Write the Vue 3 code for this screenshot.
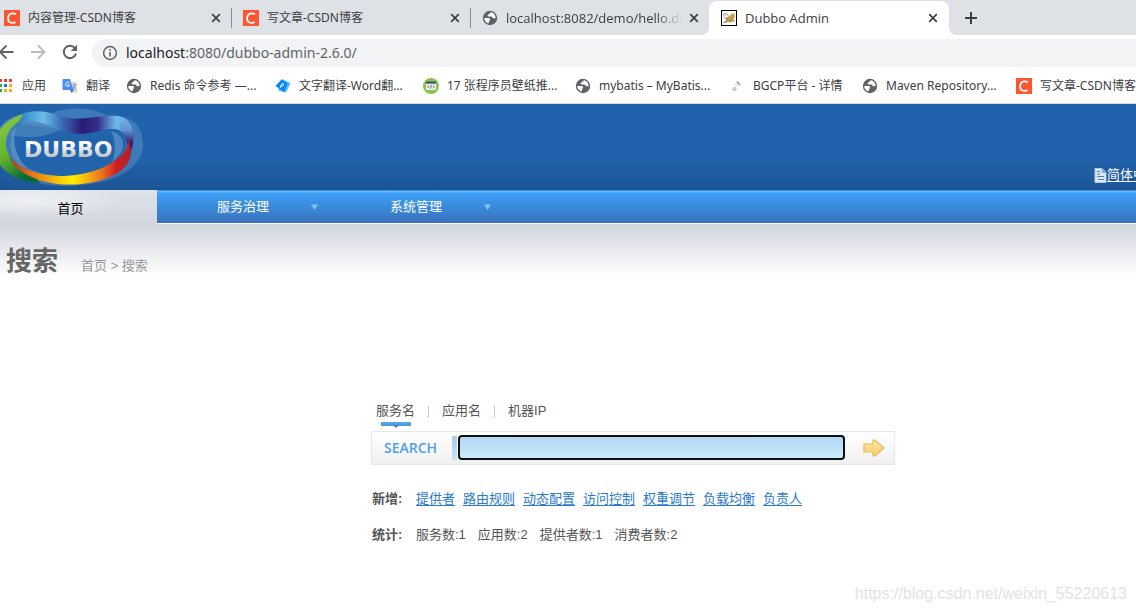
<script setup>
import { ref } from 'vue'

const tabs = [
  { icon: 'csdn', title: '内容管理-CSDN博客' },
  { icon: 'csdn', title: '写文章-CSDN博客' },
  { icon: 'globe', title: 'localhost:8082/demo/hello.do?', latin: true },
  { icon: 'cat', title: 'Dubbo Admin', latin: true, active: true }
]

const bookmarks = [
  { icon: 'apps', title: '应用' },
  { icon: 'translate', title: '翻译' },
  { icon: 'globe', title: 'Redis 命令参考 —...' },
  { icon: 'diamond', title: '文字翻译-Word翻...' },
  { icon: 'code', title: '17 张程序员壁纸推...' },
  { icon: 'globe', title: 'mybatis – MyBatis...' },
  { icon: 'bgcp', title: 'BGCP平台 - 详情' },
  { icon: 'globe', title: 'Maven Repository...' },
  { icon: 'csdn', title: '写文章-CSDN博客' }
]

const menus = ['服务治理', '系统管理']
const searchTypes = ['服务名', '应用名', '机器IP']
const current = ref(0)
const keyword = ref('')
const links = ['提供者', '路由规则', '动态配置', '访问控制', '权重调节', '负载均衡', '负责人']
const stats = ['服务数:1', '应用数:2', '提供者数:1', '消费者数:2']
</script>

<template>
  <div class="window">
    <svg class="defs" width="0" height="0" aria-hidden="true">
      <symbol id="i-csdn" viewBox="0 0 16 16">
        <rect width="16" height="16" fill="#fc5531" />
        <path d="M12 4.3C10.600 3.400 9.200 3.100 7.900 3.400C5.500 3.900 4.200 5.800 4.100 8.300C4 11.200 5.600 12.800 8.300 12.800C9.700 12.800 10.900 12.500 11.700 12.100" fill="none" stroke="#fff" stroke-width="1.800" />
      </symbol>
      <symbol id="i-globe" viewBox="0 0 16 16">
        <circle cx="8" cy="8" r="7.200" fill="#5f6368" />
        <path d="M9.200 2.300C7.500 3 7.800 4.100 6.400 4.500C5 5 5.600 6.600 6.800 6.500H9.200C10.600 6.600 10.300 8.300 11.700 8.300H13.700C13.600 5.300 11.800 2.900 9.200 2.300Z" fill="#fff" />
        <path d="M2.300 8H6.200C8 8 8.700 9.200 7.700 10.300C6.800 11.200 7.400 12.500 6.200 13.400C3.800 12.700 2.200 10.400 2.300 8Z" fill="#fff" />
      </symbol>
      <symbol id="i-cat" viewBox="0 0 16 16">
        <rect x=".5" y=".5" width="15" height="15" fill="#fff" stroke="#000" />
        <path d="M3 13L5.500 10.500L4.500 8.500L6.500 7L9.500 5.500L10 3L11.500 4.200L13.500 3L13.800 7L12.500 9L14 12L11.500 11.500L9.500 12.500L8 11L5 13Z" fill="#c99d49" />
        <path d="M2 5L3 3.500L6 4L7.500 6M2 13L6 10.500L8 12L11 10M3 8L7 8.500" fill="none" stroke="#77756b" stroke-width=".7" />
        <path d="M2 5L5 5.500L3.500 7Z" fill="#a9b4b9" />
      </symbol>
      <symbol id="i-apps" viewBox="0 0 16 16">
        <path d="M1 1h3v3H1zM6 1h3v3H6zM11 1h3v3h-3z" fill="#ea4335" />
        <path d="M1 6h3v3H1zM1 11h3v3H1z" fill="#34a853" />
        <path d="M6 6h3v3H6z" fill="#1a73e8" />
        <path d="M11 6h3v3h-3zM6 11h3v3H6zM11 11h3v3h-3z" fill="#fbad03" />
      </symbol>
      <symbol id="i-translate" viewBox="0 0 16 16">
        <path d="M7 4H15V14.500H8Z" fill="#d5dae0" />
        <path d="M1.500 1H8L11.500 12H1.500Q.5 12 .5 11V2Q.5 1 1.500 1Z" fill="#4c8bf5" />
        <path d="M8.500 12H11.500L9.700 15Z" fill="#2f62c8" />
        <path d="M7.300 5.200A2 2 0 1 0 7.500 7H5.800" fill="none" stroke="#fff" />
        <path d="M10.500 7H14.200M12.500 6V7M13.500 7.500L10.800 11.500M11.300 8.500L13.800 11.500" stroke="#7b8795" fill="none" stroke-width=".8" />
      </symbol>
      <symbol id="i-diamond" viewBox="0 0 16 16">
        <path d="M7 1L15.500 5L11 14.500L3 12.500Z" fill="#54b6ff" />
        <path d="M6.500 1.500L12.500 5.500L9 14L.5 8Z" fill="#0784f7" />
        <path d="M5 10L7 5.500Q9.300 5.800 8.500 7.500Q7.500 8.500 6 7.800" fill="none" stroke="#fff" />
      </symbol>
      <symbol id="i-code" viewBox="0 0 16 16">
        <circle cx="8" cy="8" r="8" fill="#8cc152" />
        <rect x="3" y="4" width="10" height="8" rx="1" fill="#eef2ea" />
        <rect x="3" y="3.500" width="10" height="2.200" fill="#435263" />
        <path d="M6 7.200L4.700 8.700L6 10.200M10 7.200L11.300 8.700L10 10.200M8.500 7L7.500 10.500" fill="none" stroke="#435263" stroke-width=".8" />
      </symbol>
      <symbol id="i-bgcp" viewBox="0 0 16 16">
        <path d="M7 4L9 3L12 7L10 7.500Z" fill="#aaa" />
        <path d="M6.500 5L7.500 9" stroke="#ddd" />
        <circle cx="5.500" cy="11" r="1.500" fill="#eee" stroke="#aaa" />
      </symbol>
    </svg>

    <header class="browser">
      <div class="tabstrip">
        <div v-for="(t, i) in tabs" :key="i" class="tab" :class="{ active: t.active }">
          <svg class="icon" aria-hidden="true"><use :href="'#i-' + t.icon" /></svg>
          <span class="tab-title" :class="{ latin: t.latin, faded: i === 2 }">{{ t.title }}</span>
          <button class="close" aria-label="关闭">
            <svg width="10" height="10" viewBox="0 0 10 10"><path d="M1.200 1.200L8.800 8.800M8.800 1.200L1.200 8.800" stroke="#3c4043" stroke-width="1.700" /></svg>
          </button>
        </div>
        <button class="newtab" aria-label="新标签页">
          <svg width="14" height="14" viewBox="0 0 14 14"><path d="M7 1V13M1 7H13" stroke="#3c4043" stroke-width="2" /></svg>
        </button>
      </div>

      <div class="toolbar">
        <button class="tool back" aria-label="后退">
          <svg width="16" height="16" viewBox="0 0 16 16"><path d="M15.500 8H2.500M8.500 1.500L2 8L8.500 14.500" fill="none" stroke="#5f6368" stroke-width="1.900" /></svg>
        </button>
        <button class="tool" aria-label="前进">
          <svg width="16" height="16" viewBox="0 0 16 16"><path d="M1 8H14M8 1.500L14.500 8L8 14.500" fill="none" stroke="#babcbe" stroke-width="1.900" /></svg>
        </button>
        <button class="tool" aria-label="刷新">
          <svg width="16" height="16" viewBox="0 0 16 16"><path d="M13.200 4.500A6.200 6.200 0 1 0 14 9.500" fill="none" stroke="#5f6368" stroke-width="2" /><path d="M15 .8V7H8.800Z" fill="#5f6368" /></svg>
        </button>
        <div class="omnibox">
          <svg width="16" height="16" viewBox="0 0 16 16" aria-hidden="true"><circle cx="8" cy="8" r="6.400" fill="none" stroke="#5f6368" stroke-width="1.500" /><path d="M8 7V11.500M8 4.300V5.900" stroke="#5f6368" stroke-width="1.600" /></svg>
          <span class="url"><b>localhost</b>:8080/dubbo-admin-2.6.0/</span>
        </div>
      </div>

      <nav class="bookmarks">
        <a v-for="(b, i) in bookmarks" :key="i" href="#" class="bookmark" :class="b.icon">
          <svg class="icon" aria-hidden="true"><use :href="'#i-' + b.icon" /></svg>
          <span>{{ b.title }}</span>
        </a>
      </nav>
    </header>

    <div class="banner">
      <svg class="logo" width="146" height="86" viewBox="0 0 146 86" role="img" aria-label="DUBBO">
        <defs>
          <linearGradient id="gr" x1="0" y1="0" x2=".5" y2="1">
            <stop offset="0" stop-color="#5fb6a0" /><stop offset=".25" stop-color="#7fc241" /><stop offset=".6" stop-color="#64b32e" /><stop offset="1" stop-color="#076b35" />
          </linearGradient>
          <linearGradient id="bl" x1="0" x2="1">
            <stop offset="0" stop-color="#2b7dba" /><stop offset=".22" stop-color="#6cbdeb" /><stop offset=".38" stop-color="#3b6fb8" /><stop offset=".56" stop-color="#2b1a73" /><stop offset=".7" stop-color="#33308a" /><stop offset=".86" stop-color="#6eb7ea" /><stop offset="1" stop-color="#6aaee4" />
          </linearGradient>
          <linearGradient id="side" x1="0" y1="0" x2="0" y2="1">
            <stop offset="0" stop-color="#71b7e8" /><stop offset=".3" stop-color="#5f95d2" /><stop offset=".6" stop-color="#311b70" /><stop offset="1" stop-color="#57245f" />
          </linearGradient>
          <linearGradient id="warm" x1="0" x2="1">
            <stop offset="0" stop-color="#bd2a20" /><stop offset=".2" stop-color="#e77916" /><stop offset=".52" stop-color="#fff000" /><stop offset=".75" stop-color="#ed7a1e" /><stop offset=".88" stop-color="#cf2023" /><stop offset="1" stop-color="#b31f28" />
          </linearGradient>
          <linearGradient id="silver" x1="0" y1="0" x2="0" y2="1">
            <stop offset=".25" stop-color="#fff" /><stop offset=".85" stop-color="#b9bcc0" />
          </linearGradient>
        </defs>
        <path d="M-6 40C-4 14 20 5 48 11C64 2 92 2 110 13C132 9 144 24 143 43C141 64 115 79 80 81C38 86 -4 70 -6 40Z" fill="#6fa2cf" opacity=".38" />
        <path d="M18 19C12 32 14 48 23 60C42 76 94 78 117 57C128 48 130 33 120 24C108 14 75 32 18 19Z" fill="#2164ac" />
        <path d="M9 31C36 36 48 31 60 26L40 18L22 16Z" fill="#6da5d1" opacity=".4" />
        <path d="M16 24C11 38 16 54 28 65L20 62C8 50 8 34 16 24Z" fill="#6b9cca" opacity=".5" />
        <path d="M111 27C126 31 128 47 112 58C116 47 116 36 111 27Z" fill="#6b9cca" opacity=".6" />
        <path d="M34 8C10 10 -6 26 -6 43C-4 66 14 77 40 79L34 72C22 67 8 56 6 42C5 26 17 14 40 10Z" fill="url(#gr)" />
        <path d="M24 9C35 6 47 7 57 11C73 18 91 13 106 12C119 10 128 13 132 24L126 32C121 24 113 24 103 26C87 31 71 32 54 24C44 19 31 15 18 19Z" fill="url(#bl)" />
        <path d="M122 13C130 16 135 26 133 40L129 56C129 43 127 31 119 24Z" fill="url(#side)" />
        <path d="M9 53C22 67 43 72 64 72C91 71 111 62 123 50C127 45 129 40 128 34C134 50 130 60 120 67C103 79 80 82 57 80C35 77 16 68 9 53Z" fill="url(#warm)" />
        <text x="24" y="53" class="logo-text" fill="url(#silver)">DUBBO</text>
      </svg>
      <a href="#" class="lang">
        <svg width="13" height="15" viewBox="0 0 13 15" aria-hidden="true"><path d="M1 .5H8L12 4.500V14.500H1Z" fill="#dce8f5" stroke="#b6cce5" /><path d="M8 .5V4.500H12" fill="#7e9fce" stroke="#9bb7dc" /><path d="M3 3.500H6M3 6H6M3 8.500H10M4 11.500H10" stroke="#527fb7" /></svg><span>简体中文</span>
      </a>
    </div>

    <nav class="menu">
      <a href="#" class="home">首页</a>
      <a v-for="m in menus" :key="m" href="#" class="menu-item">
        <span>{{ m }}</span>
        <svg width="7" height="6" viewBox="0 0 7 6" aria-hidden="true"><path d="M0 .5H7L3.500 6Z" fill="#84c1f7" /></svg>
      </a>
    </nav>

    <main class="page">
      <div class="heading">
        <h1>搜索</h1>
        <div class="crumbs"><a href="#">首页</a> &gt; <span>搜索</span></div>
      </div>

      <section class="search">
        <div class="types">
          <template v-for="(s, i) in searchTypes" :key="s">
            <i v-if="i" class="bar"></i>
            <button class="type" :class="{ on: current === i }" @click="current = i">{{ s }}</button>
          </template>
        </div>
        <form class="box" @submit.prevent>
          <label for="keyword">SEARCH</label>
          <span class="edge"></span>
          <input id="keyword" v-model="keyword" type="text" autocomplete="off" />
          <button class="go" aria-label="搜索">
            <svg width="22" height="18" viewBox="0 0 22 18">
              <defs><linearGradient id="gold" x1="0" y1="0" x2="0" y2="1"><stop offset="0" stop-color="#fff7a8" /><stop offset=".55" stop-color="#ffd08a" /><stop offset="1" stop-color="#fbe476" /></linearGradient></defs>
              <path d="M1 5H10V1H11.500L21 9L11.500 17H10V13H1Z" fill="url(#gold)" stroke="#e5b94f" stroke-width="1.200" stroke-linejoin="round" />
            </svg>
          </button>
        </form>
        <div class="line">
          <strong>新增:</strong>
          <div class="links"><a v-for="l in links" :key="l" href="#">{{ l }}</a></div>
        </div>
        <div class="line">
          <strong>统计:</strong>
          <div class="stats"><span v-for="s in stats" :key="s">{{ s }}</span></div>
        </div>
      </section>
    </main>
    <div class="watermark">https://blog.csdn.net/weixin_55220613</div>
  </div>
</template>

<style>
html, body { background: #fff; }
</style>

<style scoped>
.window {
  position: relative;
  min-height: 100vh;
  overflow: hidden;
  font: 13px/20px "Liberation Sans", "Noto Sans CJK SC", sans-serif;
  color: #555;
}
.defs { position: absolute; }
button { padding: 0; border: 0; background: none; font: inherit; color: inherit; }
svg { display: block; flex: none; }
a { color: inherit; text-decoration: none; }
.icon { width: 16px; height: 16px; }

.browser {
  font: 12px/16px "Noto Sans", "Noto Sans CJK SC", sans-serif;
  color: #3c4043;
  border-bottom: 1px solid #d9dadc;
}
.latin { font-family: "Open Sans", sans-serif; font-size: 13px; }
.tabstrip { display: flex; height: 35px; background: #dee1e6; }
.tab {
  box-sizing: border-box;
  flex: 0 0 239px;
  min-width: 0;
  display: flex;
  align-items: center;
  gap: 8px;
  padding: 1px 11px 0 11px;
  position: relative;
}
.tab:first-child { flex-basis: 232px; padding-left: 4px; }
.tab:nth-child(-n+2)::after {
  content: "";
  position: absolute;
  right: 0;
  top: 8px;
  height: 20px;
  width: 1px;
  background: #8b8e93;
}
.tab.active {
  flex-basis: 240px;
  margin: 1px 0 0 -1px;
  padding: 0 11px 0 12px;
  background: #fff;
  border-radius: 8px 8px 0 0;
}
.tab.active::before, .tab.active::after {
  content: "";
  position: absolute;
  bottom: 0;
  width: 8px;
  height: 8px;
}
.tab.active::before { left: -8px; background: radial-gradient(circle at 0 0, #dee1e6 8px, #fff 8px); }
.tab.active::after { right: -8px; background: radial-gradient(circle at 100% 0, #dee1e6 8px, #fff 8px); }
.tab-title { flex: 1; min-width: 0; white-space: nowrap; overflow: hidden; }
.faded { mask-image: linear-gradient(to right, #000 150px, transparent 176px); }
.close, .newtab { display: flex; align-items: center; }
.newtab { margin-left: 15px; }

.toolbar { display: flex; align-items: center; height: 33px; gap: 16px; }
.tool { flex: none; }
.back { margin-left: -2px; }
.omnibox {
  flex: 1;
  display: flex;
  align-items: center;
  gap: 8px;
  height: 28px;
  margin-right: -16px;
  margin-left: -2px;
  margin-top: 3px;
  padding-left: 10px;
  background: #f1f3f4;
  border-radius: 14px;
}
.url { font-size: 14px; color: #5f6368; }
.url b { font-weight: 400; color: #202124; }
.bookmarks {
  display: grid;
  grid-template-columns: 62px 64px 149px 148px 152px 154px 133px 154px auto;
  align-items: center;
  height: 35px;
}
.bookmark { display: flex; align-items: center; gap: 8px; white-space: nowrap; }
.bookmark.apps { margin-left: -2px; }

.banner {
  display: flex;
  justify-content: space-between;
  align-items: flex-end;
  height: 86px;
  background: linear-gradient(#2062ab 60%, #1c5594);
}
.logo-text { font: bold 22px "DejaVu Sans", sans-serif; }
.lang { display: flex; align-items: center; margin: 0 -23px 5px 0; color: #fff; }
.lang span { text-decoration: underline; text-underline-offset: 2px; }

.menu {
  display: flex;
  height: 34px;
  line-height: 38px;
  color: #fff;
  background: linear-gradient(#4292df 1px, #6bb9fa 1px, #6bb9fa 2px, #3a9ff6 3px, #3a73bd 32px, #3a73bd 33px, #fff 33px);
}
.home {
  width: 157px;
  box-sizing: border-box;
  padding-right: 16px;
  text-align: center;
  color: #000;
  background: radial-gradient(ellipse at 30px 10px, #eff1f4, transparent 90px), linear-gradient(#dfe3e8, #d2d7df);
}
.menu-item { display: flex; align-items: center; width: 173px; box-sizing: border-box; padding: 0 12px 0 60px; justify-content: space-between; }

.page { background: linear-gradient(#d0d4dc, #fff 52px); }
.heading { display: flex; align-items: baseline; gap: 23px; padding: 17px 6px 0; color: #999; }
h1 { margin: 0; font-size: 26px; line-height: 40px; color: #666; }
.search { width: 524px; margin: 119px 0 0 371px; }
.types { display: flex; align-items: center; gap: 13px; padding-left: 5px; height: 22px; }
.type { position: relative; line-height: 20px; }
.type.on::before {
  content: "";
  position: absolute;
  left: 5px;
  right: 4px;
  top: 21px;
  height: 4px;
  background: linear-gradient(#5aa7ea, #4c97d9);
}
.type.on::after {
  content: "";
  position: absolute;
  left: 17px;
  top: 24px;
  border: 3px solid transparent;
  border-top-color: #3d83bd;
  border-bottom: 0;
}
.bar { width: 1px; height: 11px; background: #c5c5c5; }
.box {
  display: flex;
  align-items: center;
  box-sizing: border-box;
  height: 34px;
  margin-top: 9px;
  padding-bottom: 1px;
  border: 1px solid #e7e8e9;
  background: linear-gradient(#fff, #f0f0f0);
}
.box label { width: 80px; box-sizing: border-box; padding-left: 12px; font: 600 14px/20px "Open Sans", sans-serif; color: #509eed; }
.edge { width: 5px; height: 24px; margin-right: 1px; background: linear-gradient(#a9cbe9, #c4e6f6); }
input {
  flex: 1;
  min-width: 0;
  box-sizing: border-box;
  height: 25px;
  padding: 0 6px;
  font: inherit;
  border: 2px solid #101010;
  border-radius: 4px;
  background: linear-gradient(#b3d6f5, #caecfb);
  outline: 0;
}
.go { margin: 0 9px 0 18px; }
.line { display: flex; gap: 12px; line-height: 20px; margin-top: 16px; white-space: nowrap; }
.box + .line { margin-top: 24px; }
.line strong { width: 32px; padding-left: 1px; }
.links { display: flex; gap: 8px; }
.links a { color: #2b78d0; text-decoration: underline; text-underline-offset: 2px; }
.stats { display: flex; gap: 12px; }
.watermark { position: absolute; right: 9px; bottom: 8px; font-size: 16px; color: #e2e2e2; }
</style>
